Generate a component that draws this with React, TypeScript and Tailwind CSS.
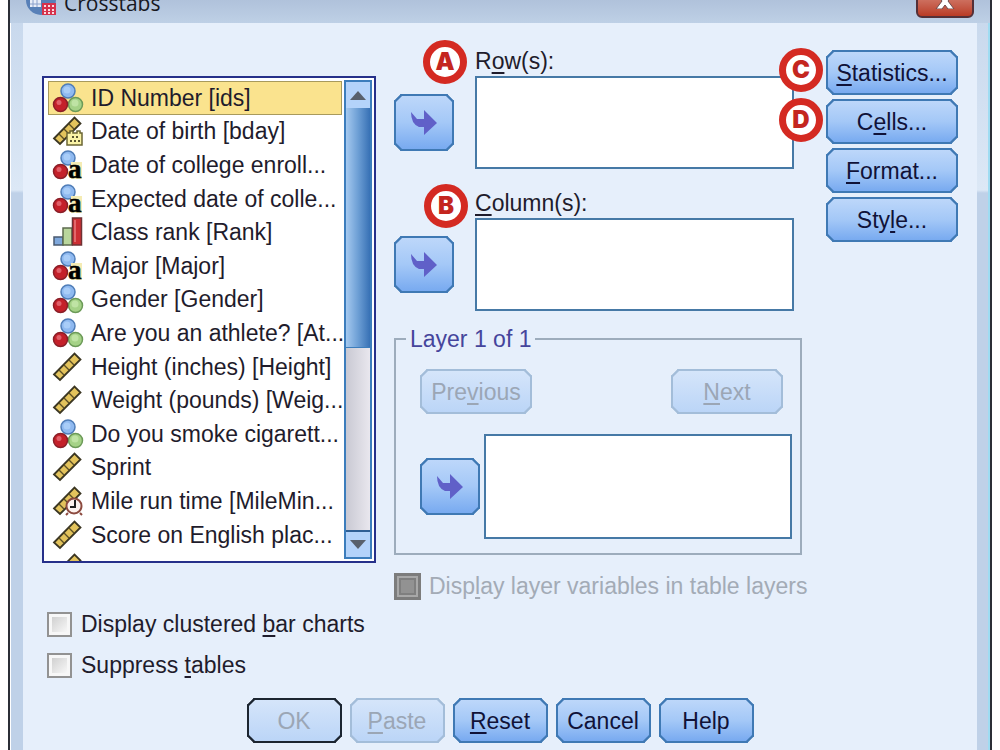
import { useState, type ReactNode } from "react";
import { clsx } from "clsx";

type Kind = "nominal" | "date" | "string" | "ordinal" | "scale" | "time";

interface Variable {
  label: string;
  kind: Kind;
}

const variables: Variable[] = [
  { label: "ID Number [ids]", kind: "nominal" },
  { label: "Date of birth [bday]", kind: "date" },
  { label: "Date of college enroll...", kind: "string" },
  { label: "Expected date of colle...", kind: "string" },
  { label: "Class rank [Rank]", kind: "ordinal" },
  { label: "Major [Major]", kind: "string" },
  { label: "Gender [Gender]", kind: "nominal" },
  { label: "Are you an athlete? [At...", kind: "nominal" },
  { label: "Height (inches) [Height]", kind: "scale" },
  { label: "Weight (pounds) [Weig...", kind: "scale" },
  { label: "Do you smoke cigarett...", kind: "nominal" },
  { label: "Sprint", kind: "scale" },
  { label: "Mile run time [MileMin...", kind: "time" },
  { label: "Score on English plac...", kind: "scale" },
  { label: "", kind: "scale" },
];

const Balls = ({ green = true }: { green?: boolean }) => (
  <>
    <circle cx="15" cy="8" r="7" fill="#8fb9f0" stroke="#4f7db8" strokeWidth="1.5" />
    <circle cx="14" cy="7" r="3.5" fill="#a9cdf8" />
    {green && (
      <>
        <circle cx="22.5" cy="21.5" r="7" fill="#a5d287" stroke="#6c9a58" strokeWidth="1.5" />
        <circle cx="22" cy="20" r="3.5" fill="#bfe3a4" />
      </>
    )}
    <circle cx="7.5" cy="21.5" r="7" fill="#c4202a" stroke="#8a1f28" strokeWidth="1.5" />
    <circle cx="6" cy="19.5" r="2.5" fill="#e0606a" />
  </>
);

const Ruler = () => (
  <>
    <path d="M1 22.5L21.5 1.5L27.5 7.5L7 28Z" fill="#e3c35c" stroke="#3b3622" strokeWidth="1.8" />
    <path
      d="M6 18L11 23M11 13L16 18M16 8L21 13"
      stroke="#5d5025"
      strokeWidth="1.4"
      fill="none"
    />
  </>
);

const VariableIcon = ({ kind }: { kind: Kind }) => (
  <svg className="size-[30px] shrink-0 overflow-visible" viewBox="0 0 30 30" aria-hidden="true">
    {kind === "nominal" && <Balls />}
    {kind === "string" && (
      <>
        <Balls green={false} />
        <path d="M18 12h11v17H18z" fill="#f5ecb4" />
        <text
          x="15"
          y="28"
          fontSize="27"
          fontWeight="700"
          fill="#000"
          stroke="#000"
          strokeWidth="0.6"
          className="font-['Liberation_Serif',serif]"
        >
          a
        </text>
      </>
    )}
    {(kind === "scale" || kind === "date" || kind === "time") && <Ruler />}
    {kind === "date" && (
      <>
        <path d="M14 17h3v-2h3v2h4v-2h3v2h2v12H14z" fill="#faf3a6" stroke="#6b6534" strokeWidth="1.5" />
        <path d="M19 21h2M23 21h2M17 25h2M21 25h2M25 25h2" stroke="#5a5530" strokeWidth="2" />
      </>
    )}
    {kind === "time" && (
      <>
        <circle cx="21" cy="20" r="7.5" fill="#fdf3ef" stroke="#8c4a3f" strokeWidth="2" />
        <path d="M15 27l-2 2M27 27l2 2" stroke="#8c4a3f" strokeWidth="2" />
        <path d="M22 14v7h-5" stroke="#222" strokeWidth="2" fill="none" />
      </>
    )}
    {kind === "ordinal" && (
      <>
        <path d="M1 20h9v8H1z" fill="#7fa8dc" stroke="#4a5a70" strokeWidth="1.5" />
        <path d="M10 11h9v17h-9z" fill="#b9d69c" stroke="#5c6b4e" strokeWidth="1.5" />
        <path d="M19.500 1h9v27h-9z" fill="#cc2f33" stroke="#6f3235" strokeWidth="1.500" />
        <path d="M22 3v22" stroke="#e2686a" strokeWidth="2" />
      </>
    )}
  </svg>
);

interface DialogButtonProps {
  children: ReactNode;
  className?: string;
  disabled?: boolean;
  isDefault?: boolean;
}

const DialogButton = ({ children, className, disabled, isDefault }: DialogButtonProps) => (
  <button
    type="button"
    disabled={disabled}
    className={clsx(
      "flex h-[45px] items-center justify-center whitespace-nowrap rounded-[7px] border-2 [corner-shape:bevel]",
      disabled
        ? "bg-linear-to-b from-[#d5e5fa] to-[#bbd5f7] text-[#9ba6b5]"
        : "border-[#3f79b4] bg-linear-to-b from-[#bdd7fa] via-[#a4c8f7] to-[#78aaf0] text-[#101238]",
      disabled && (isDefault ? "border-[#1c2530]" : "border-[#a3bdd9]"),
      className
    )}
  >
    <span>{children}</span>
  </button>
);

const Key = ({ children }: { children: string }) => (
  <span className="underline decoration-2 underline-offset-[3px]">{children}</span>
);

const MoveButton = ({ label }: { label: string }) => (
  <button
    type="button"
    aria-label={label}
    className="flex h-[57px] w-[60px] shrink-0 items-center justify-center rounded-[7px] border-2 border-[#3f79b4] bg-linear-to-b from-[#bdd7fa] via-[#a4c8f7] to-[#78aaf0] [corner-shape:bevel]"
  >
    <svg className="h-[25px] w-[26px]" viewBox="0 0 26 25" aria-hidden="true">
      <path d="M0 2L6 9H13V0L26 13L13 25V17H8Q0 14 0 2Z" fill="#6060c8" />
    </svg>
  </button>
);

const Badge = ({ children, className }: { children: string; className: string }) => (
  <span
    className={clsx(
      "absolute flex size-[44px] items-center justify-center rounded-full border-[7px] border-[#d42a22] bg-white font-['Inter',sans-serif] text-[24px] leading-none font-black text-[#c4261f]",
      className
    )}
  >
    {children}
  </span>
);

const CheckOption = ({ id, children }: { id: string; children: ReactNode }) => (
  <div className="flex items-center gap-[9px]">
    <input
      id={id}
      type="checkbox"
      className="size-[25px] appearance-none border-2 border-[#929292] bg-linear-to-br from-[#c9c9c9] to-white shadow-[inset_0_0_0_3px_#f7f7f7] checked:bg-[#5b7fb5]"
    />
    <label htmlFor={id}>{children}</label>
  </div>
);

const TargetBox = ({ label, className }: { label: string; className: string }) => (
  <div role="listbox" aria-label={label} className={clsx("flex-1 border-2 border-[#4679a6] bg-white", className)} />
);

const TitleBar = () => (
  <div className="flex h-[23px] items-end justify-between overflow-hidden bg-linear-to-b from-[#b0c2db] to-[#bed0e6]">
    <div className="flex items-end gap-2 pl-4">
      <svg className="h-[23px] w-[30px]" viewBox="0 0 30 23" aria-hidden="true">
        <circle cx="15" cy="0" r="15" fill="#5880b8" />
        <path d="M4 0h11v7H4z" fill="#e9edf8" />
        <path d="M7 0v7M11 0v7M4 4h11" stroke="#8aa0cc" strokeWidth="1" />
        <path d="M16 3h14v12H16z" fill="#d6324c" />
        <path d="M18 5h2v2h-2zM22 5h2v2h-2zM26 5h2v2h-2zM18 9h2v2h-2zM22 9h2v2h-2zM26 9h2v2h-2zM18 12h2v2h-2zM22 12h2v2h-2zM26 12h2v2h-2z" fill="#f8dce4" />
      </svg>
      <h1 className="pb-[7px] font-['Open_Sans',sans-serif] text-[21px] leading-[26px] text-[#17181f]">Crosstabs</h1>
    </div>
    <button
      type="button"
      aria-label="Close"
      className="mr-4 mb-[5px] flex h-[30px] w-[58px] shrink-0 items-end justify-center rounded-md border-2 border-[#543038] bg-linear-to-b from-[#d78c80] to-[#b93a24] pb-[7px]"
    >
      <svg className="h-[16px] w-[20px]" viewBox="0 0 20 16" aria-hidden="true">
        <path
          d="M1 0H7L10 4L13 0H19L13 8L19 16H13L10 12L7 16H1L7 8Z"
          fill="#fff"
          stroke="#6d4a4c"
          strokeWidth="1"
        />
      </svg>
    </button>
  </div>
);

const VariableList = () => {
  const [selected, setSelected] = useState(0);

  return (
    <div className="flex h-[487px] gap-[2px] overflow-hidden border-2 border-[#26308a] bg-white p-[2px]">
      <ul
        role="listbox"
        aria-label="Variables"
        className="grid h-[505px] min-w-0 flex-1 auto-rows-fr grid-cols-1 pt-px pl-[2px] whitespace-nowrap"
      >
        {variables.map((variable, index) => (
          <li
            key={index}
            role="option"
            aria-selected={index === selected}
            onClick={() => setSelected(index)}
            className={clsx(
              "flex items-center gap-2 border pl-1",
              index === selected ? "border-[#a89a5c] bg-[#fae38e]" : "border-transparent"
            )}
          >
            <VariableIcon kind={variable.kind} />
            <span>{variable.label}</span>
          </li>
        ))}
      </ul>

      {/* Scrollbar */}
      <div className="flex w-[28px] shrink-0 flex-col border-2 border-[#3c7dbc] bg-linear-to-r from-[#c9c9d3] to-[#e9e7ee]">
        <button type="button" aria-label="Scroll up" className="flex h-[26px] items-center justify-center bg-[#b4d3fa]">
          <svg className="h-[9px] w-[16px]" viewBox="0 0 16 9" aria-hidden="true">
            <path d="M8 0L16 9H0Z" fill="#58606c" />
          </svg>
        </button>
        <div className="h-[240px] border-b border-[#3c7dbc] bg-linear-to-r from-[#a5c9ef] via-[#6d9fd5] to-[#3771b5]" />
        <div className="flex-1" />
        <button
          type="button"
          aria-label="Scroll down"
          className="flex h-[27px] items-center justify-center border-t-2 border-[#2f5f94] bg-[#b4d3fa]"
        >
          <svg className="h-[9px] w-[16px]" viewBox="0 0 16 9" aria-hidden="true">
            <path d="M0 0H16L8 9Z" fill="#58606c" />
          </svg>
        </button>
      </div>
    </div>
  );
};

const LayerGroup = () => (
  <fieldset className="mt-[14px] min-w-0 border-2 border-[#9dacbc] px-[6px] pb-[14px]">
    <legend className="ml-1 px-1 leading-[28px] text-[#45459c]">Layer 1 of 1</legend>
    <div className="mt-4 flex justify-between pr-[11px] pl-[18px]">
      <DialogButton className="w-[112px]" disabled>
        Pre<Key>v</Key>ious
      </DialogButton>
      <DialogButton className="w-[112px]" disabled>
        <Key>N</Key>ext
      </DialogButton>
    </div>
    <div className="mt-5 flex items-center gap-1 pr-[2px] pl-[18px]">
      <MoveButton label="Move to layer" />
      <TargetBox label="Layer variables" className="h-[105px]" />
    </div>
  </fieldset>
);

export default function App() {
  return (
    <div className="flex h-screen min-h-[750px] overflow-hidden bg-white px-2 font-['Liberation_Sans',Arial,sans-serif] text-[23px] leading-[28px] text-[#1f1c2c]">
      <div className="flex min-w-0 flex-1 flex-col border-x-2 border-[#2b2e36]">
        <TitleBar />
        <main className="flex flex-1 border-r-2 border-l border-r-[#9fdcf2] border-l-white bg-linear-to-b from-[#c9d9ed] from-0% via-[#dce8f6] via-[167px] to-[#bfd1e8] to-[170px] pr-[11px] pl-3">
          <div className="min-w-0 flex-1 bg-[#e6effb] px-[19px]">
            <div className="flex">
              <div className="w-[334px] shrink-0 pt-[53px]">
                <VariableList />
                <div className="mt-[47px] flex flex-col gap-[13px] pl-[5px]">
                  <CheckOption id="clustered">
                    Display clustered <Key>b</Key>ar charts
                  </CheckOption>
                  <CheckOption id="suppress">
                    Suppress <Key>t</Key>ables
                  </CheckOption>
                </div>
              </div>

              {/* Targets */}
              <div className="ml-[18px] min-w-0 flex-1 pt-[23px]">
                <div className="relative">
                  <p className="pl-[81px] leading-[30px]">
                    R<Key>o</Key>w(s):
                  </p>
                  <div className="flex items-center gap-[21px] pr-2">
                    <MoveButton label="Move to rows" />
                    <TargetBox label="Rows" className="h-[93px]" />
                  </div>
                  <Badge className="-top-[6px] left-[29px]">A</Badge>
                </div>
                <div className="relative mt-[19px]">
                  <p className="pl-[81px] leading-[30px]">
                    <Key>C</Key>olumn(s):
                  </p>
                  <div className="flex items-center gap-[21px] pr-2">
                    <MoveButton label="Move to columns" />
                    <TargetBox label="Columns" className="h-[93px]" />
                  </div>
                  <Badge className="-top-[4px] left-[30px]">B</Badge>
                </div>
                <LayerGroup />
                <div className="mt-[17px] flex items-center gap-2 whitespace-nowrap text-[#a3abb6]">
                  <input
                    id="layers"
                    type="checkbox"
                    disabled
                    className="size-[27px] shrink-0 appearance-none border-[3px] border-[#7c7c7c] bg-[#929292] shadow-[inset_0_0_0_2px_#a8a8a8,inset_0_0_0_4px_#7f7f7f]"
                  />
                  <label htmlFor="layers">
                    Disp<Key>l</Key>ay layer variables in table layers
                  </label>
                </div>
              </div>

              {/* Options */}
              <div className="ml-6 flex w-[132px] shrink-0 flex-col gap-1 pt-[27px]">
                <div className="relative flex flex-col">
                  <DialogButton>
                    <Key>S</Key>tatistics...
                  </DialogButton>
                  <Badge className="-top-[2px] -left-[47px]">C</Badge>
                </div>
                <div className="relative flex flex-col">
                  <DialogButton>
                    C<Key>e</Key>lls...
                  </DialogButton>
                  <Badge className="-top-[1px] -left-[47px]">D</Badge>
                </div>
                <DialogButton>
                  <Key>F</Key>ormat...
                </DialogButton>
                <DialogButton>
                  Sty<Key>l</Key>e...
                </DialogButton>
              </div>
            </div>

            <div className="mt-[19px] flex justify-center gap-2">
              <DialogButton className="w-[95px]" disabled isDefault>
                OK
              </DialogButton>
              <DialogButton className="w-[95px]" disabled>
                <Key>P</Key>aste
              </DialogButton>
              <DialogButton className="w-[95px]">
                <Key>R</Key>eset
              </DialogButton>
              <DialogButton className="w-[95px]">Cancel</DialogButton>
              <DialogButton className="w-[95px]">Help</DialogButton>
            </div>
          </div>
        </main>
      </div>
    </div>
  );
}
